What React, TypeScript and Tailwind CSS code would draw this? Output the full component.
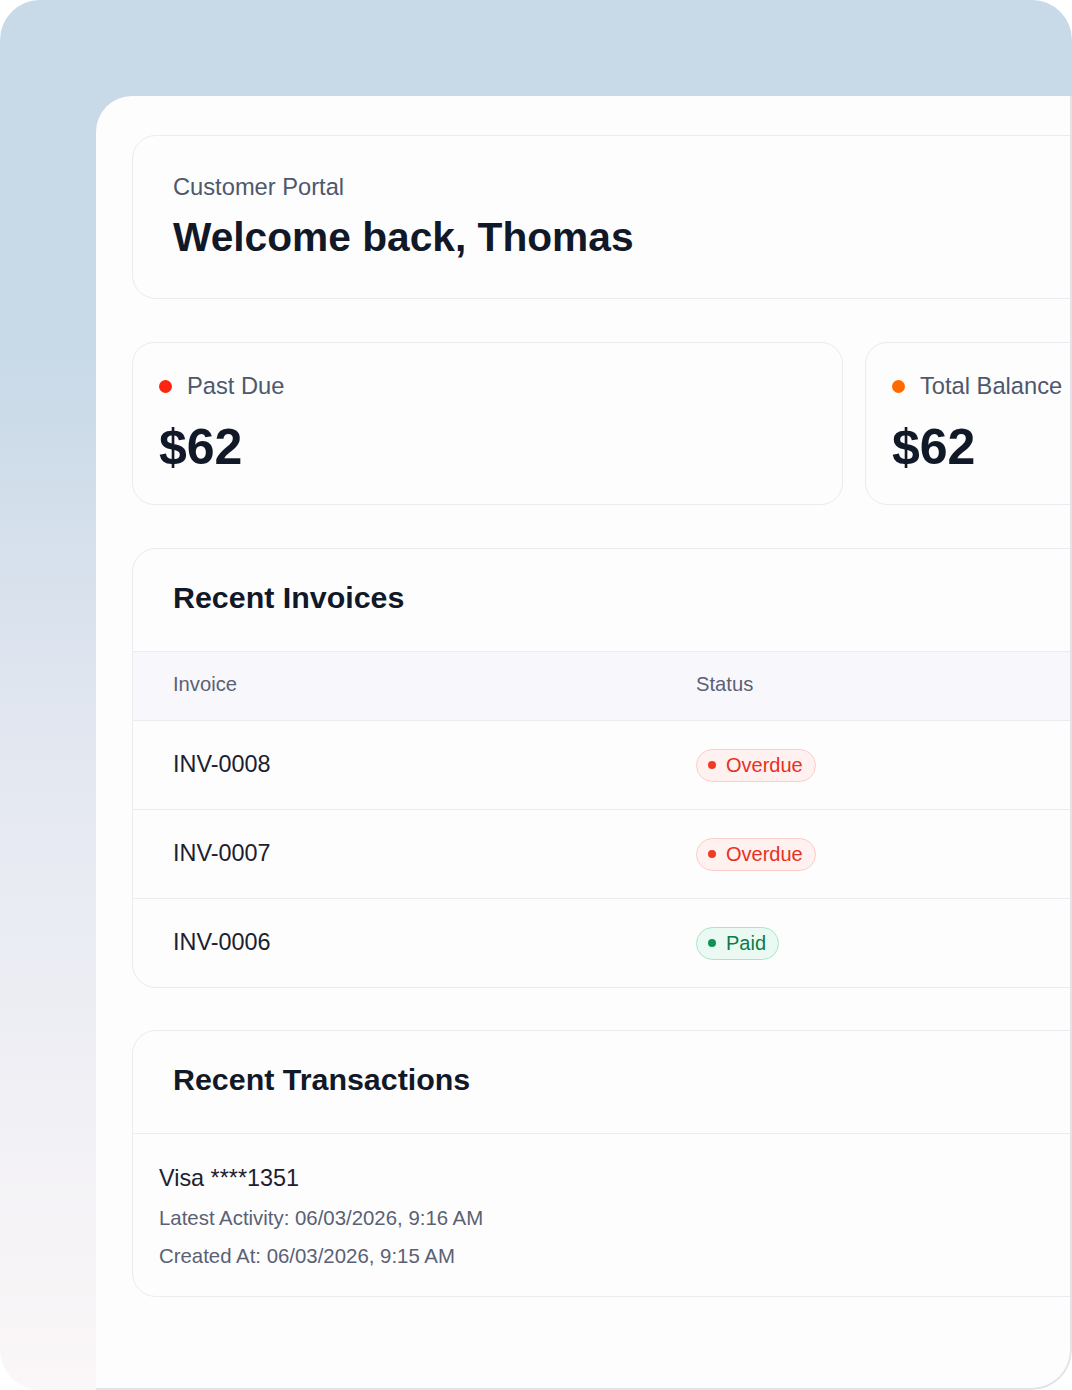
export default function App() {
  const invoices = [
    { id: "INV-0008", status: "Overdue" },
    { id: "INV-0007", status: "Overdue" },
    { id: "INV-0006", status: "Paid" },
  ];

  return (
    <div className="w-[1072px] h-[1390px] bg-white font-['Liberation_Sans',Arial,sans-serif]">
      <div className="flex h-full w-full overflow-hidden rounded-[40px] bg-linear-to-b from-[#c8d9e7] from-25% via-[#e4e8f1] via-55% to-[#fbf7f8] pl-[96px] pt-[96px]">
        <div className="flex-1 overflow-hidden rounded-tl-[36px] rounded-br-[40px] border-r-2 border-b-2 border-[#e3e3e7] bg-[#fdfdfe] pl-[36px] pt-[39px]">
          <div className="flex w-[1444px] flex-col">
            {/* header */}
            <div className="rounded-[24px] border border-[#ebebf0] bg-[#fdfdfe] pl-[40px] pt-[37px] pb-[37px]">
              <p className="text-[23.7px] leading-[28px] text-[#4e586c]">
                Customer Portal
              </p>
              <h1 className="mt-[12px] text-[40.7px] font-bold leading-[48px] text-[#111827]">
                Welcome back, Thomas
              </h1>
            </div>

            {/* stats */}
            <div className="mt-[43px] grid grid-cols-2 gap-[22px]">
              {[
                { label: "Past Due", value: "$62", dot: "bg-[#ff2410]" },
                { label: "Total Balance", value: "$62", dot: "bg-[#ff6a00]" },
              ].map((s) => (
                <div
                  key={s.label}
                  className="rounded-[22px] border border-[#ebebf0] bg-[#fdfdfe] pl-[26px] pt-[29px] pb-[29px]"
                >
                  <div className="flex items-center gap-[15px]">
                    <span className={`h-[13px] w-[13px] rounded-full ${s.dot}`} />
                    <span className="text-[23.7px] leading-[28px] text-[#4e586c]">
                      {s.label}
                    </span>
                  </div>
                  <p className="mt-[19px] text-[50px] font-bold leading-[56px] text-[#111827]">
                    {s.value}
                  </p>
                </div>
              ))}
            </div>

            {/* invoices */}
            <div className="mt-[43px] overflow-hidden rounded-[24px] border border-[#ebebf0] bg-[#fdfdfe]">
              <h2 className="pl-[40px] pt-[30px] pb-[36px] text-[30.4px] font-bold leading-[36px] text-[#111827]">
                Recent Invoices
              </h2>
              <div className="grid h-[69px] grid-cols-[523px_1fr] items-center border-t border-[#ebebf0] bg-[#f8f8fc] pl-[40px] pb-[3px] text-[20.2px] text-[#5a6174]">
                <span>Invoice</span>
                <span>Status</span>
              </div>
              {invoices.map((inv) => (
                <div
                  key={inv.id}
                  className="grid h-[89px] grid-cols-[523px_1fr] items-center border-t border-[#ebebf0] pl-[40px]"
                >
                  <span className="text-[23.4px] text-[#1c2130]">{inv.id}</span>
                  <div>
                    {inv.status === "Overdue" ? (
                      <span className="inline-flex h-[33px] items-center gap-[10px] rounded-full border border-[#fbcdc8] bg-[#fff1f0] pl-[11px] pr-[12px] text-[20px] text-[#e8301c]">
                        <span className="h-[8px] w-[8px] rounded-full bg-[#f03a22]" />
                        Overdue
                      </span>
                    ) : (
                      <span className="inline-flex h-[33px] items-center gap-[10px] rounded-full border border-[#a8e6c8] bg-[#eafaf2] pl-[11px] pr-[12px] text-[20px] text-[#0d7a4a]">
                        <span className="h-[8px] w-[8px] rounded-full bg-[#0f9257]" />
                        Paid
                      </span>
                    )}
                  </div>
                </div>
              ))}
            </div>

            {/* transactions */}
            <div className="mt-[42px] overflow-hidden rounded-[24px] border border-[#ebebf0] bg-[#fdfdfe]">
              <h2 className="pl-[40px] pt-[30px] pb-[36px] text-[30.4px] font-bold leading-[36px] text-[#111827]">
                Recent Transactions
              </h2>
              <div className="border-t border-[#ebebf0] pl-[26px] pt-[30px] pb-[21px]">
                <p className="text-[23.4px] leading-[28px] text-[#1c2130]">
                  Visa ****1351
                </p>
                <p className="mt-[7px] text-[20.4px] leading-[38px] text-[#5a6174]">
                  Latest Activity: 06/03/2026, 9:16 AM
                </p>
                <p className="text-[20.4px] leading-[38px] text-[#5a6174]">
                  Created At: 06/03/2026, 9:15 AM
                </p>
              </div>
            </div>
          </div>
        </div>
      </div>
    </div>
  );
}
